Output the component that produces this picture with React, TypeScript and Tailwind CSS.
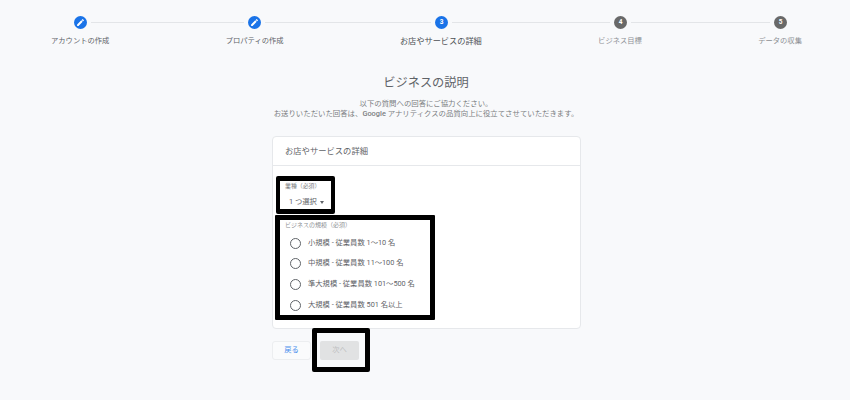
const font = "font-['Roboto','Noto_Sans_CJK_JP',sans-serif]";

function EditIcon() {
  return (
    <svg viewBox="0 0 24 24" className="h-[9px] w-[9px] fill-white">
      <path d="M3 17.25V21h3.75L17.81 9.94l-3.75-3.75L3 17.25zM20.71 7.04a1 1 0 0 0 0-1.41l-2.34-2.34a1 1 0 0 0-1.41 0l-1.83 1.83 3.75 3.75 1.83-1.83z" />
    </svg>
  );
}

function Dot({ children, on }: { children: React.ReactNode; on?: boolean }) {
  return (
    <div className={`flex h-[13px] w-[13px] shrink-0 items-center justify-center rounded-full text-[6.5px] font-bold text-white ${on ? "bg-[#1a73e8]" : "bg-[#696969]"}`}>
      {children}
    </div>
  );
}

function Line({ className }: { className: string }) {
  return <div className={`mx-[4px] h-px bg-[#e3e5e8] ${className}`} />;
}

function Stepper() {
  return (
    <div className="pt-[16px]">
      <div className="flex items-center pl-[74px]">
        <Dot on><EditIcon /></Dot>
        <Line className="w-[153px]" />
        <Dot on><EditIcon /></Dot>
        <Line className="w-[166px]" />
        <Dot on>3</Dot>
        <Line className="w-[158px]" />
        <Dot>4</Dot>
        <Line className="w-[139px]" />
        <Dot>5</Dot>
      </div>
      <div className="mt-[6px] flex justify-between pr-[48px] pl-[51px] text-[7.3px] leading-[12px] text-[#7a7d81]">
        <span className="text-[#5f6368]">アカウントの作成</span>
        <span className="text-[#5f6368]">プロパティの作成</span>
        <span className="text-[8.2px] text-[#4d5054]">お店やサービスの詳細</span>
        <span className="text-[#8d9094]">ビジネス目標</span>
        <span className="text-[#8d9094]">データの収集</span>
      </div>
    </div>
  );
}

function Radio({ label }: { label: string }) {
  return (
    <label className="flex h-[20.6px] items-center">
      <span className="h-[11px] w-[11px] rounded-full border-[1.5px] border-[#5f6368]" />
      <span className="ml-[7px] text-[7.3px] text-[#5f6368]">{label}</span>
    </label>
  );
}

export default function App() {
  return (
    <div className={`relative h-[400px] w-[850px] overflow-hidden bg-[#f8f9fb] ${font}`}>
      <Stepper />

      <h1 className="mt-[27px] pl-[2px] text-center text-[12.2px] leading-[18px] font-normal text-[#5f6368]">ビジネスの説明</h1>
      <p className="mt-[7px] pl-[2px] text-center text-[7.4px] leading-[10px] text-[#7a7d81]">
        以下の質問への回答にご協力ください。
        <br />
        お送りいただいた回答は、<span className="font-medium">Google</span> アナリティクスの品質向上に役立てさせていただきます。
      </p>

      <div className="mt-[17px] ml-[272px] w-[309px] rounded-[4px] border border-[#e6e8eb] bg-white">
        <div className="flex h-[29px] items-center border-b border-[#e6e8eb] pl-[12px] text-[8.3px] text-[#5f6368]">お店やサービスの詳細</div>
        <div className="h-[162px] pt-[16px] pl-[12px]">
          <div className="text-[5.9px] leading-[8px] text-[#7a7d81]">業種（必須）</div>
          <div className="mt-[6px] flex items-center pl-[4px] text-[7.3px] leading-[12px] text-[#5f6368]">
            1 つ選択
            <span className="mt-px ml-[3px] border-x-[2.5px] border-t-[3px] border-x-transparent border-t-[#5f6368]" />
          </div>
          <div className="mt-[13px] text-[6px] leading-[8px] text-[#8d9094]">ビジネスの規模（必須）</div>
          <div className="mt-[4px] pl-[5px]">
            <Radio label="小規模 - 従業員数 1～10 名" />
            <Radio label="中規模 - 従業員数 11～100 名" />
            <Radio label="準大規模 - 従業員数 101～500 名" />
            <Radio label="大規模 - 従業員数 501 名以上" />
          </div>
        </div>
      </div>

      <div className="mt-[12px] ml-[272px] flex gap-[9px]">
        <button className="h-[19px] w-[39px] rounded-[3px] border border-[#eceef0] bg-[#fafbfc] text-[7.3px] text-[#4a8fec]">戻る</button>
        <button className="h-[19px] w-[39px] rounded-[2px] bg-[#e1e2e3] text-[7.3px] text-[#bcbdbe]">次へ</button>
      </div>

      {/* annotation boxes drawn over the screenshot */}
      <div className="absolute top-[176px] left-[276px] h-[38px] w-[59px] rounded-[2px] border-x-[4px] border-y-[5px] border-black" />
      <div className="absolute top-[215px] left-[275px] h-[105px] w-[160px] rounded-[1px] border-[5px] border-black" />
      <div className="absolute top-[328px] left-[312px] h-[44px] w-[58px] rounded-[2px] border-[5px] border-black" />
    </div>
  );
}
